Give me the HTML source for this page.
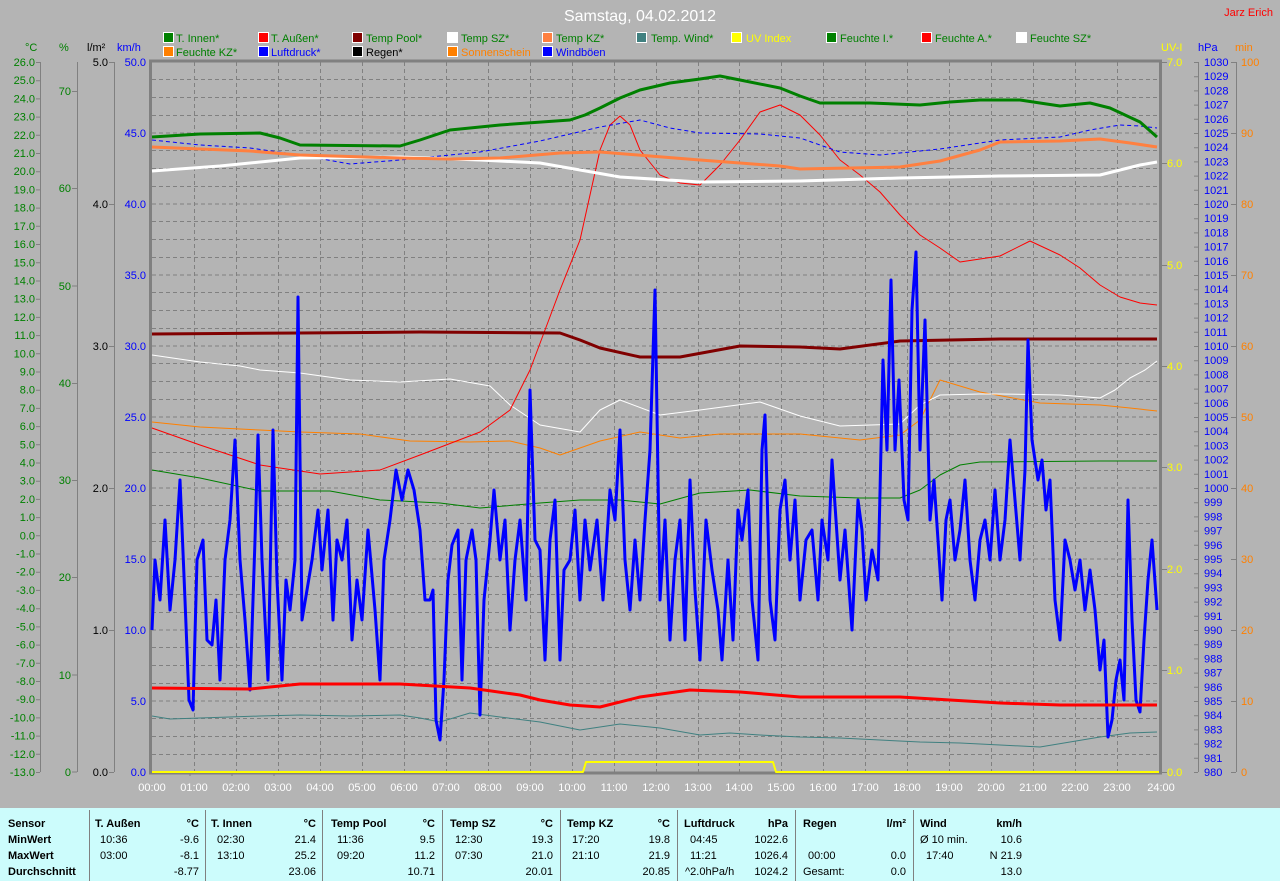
<!DOCTYPE html>
<html><head><meta charset="utf-8"><style>
html,body{margin:0;padding:0;background:#b4b4b4;}
svg{display:block;font-family:"Liberation Sans",sans-serif;}
.g{fill:#008000}.b{fill:#0000ff}.k{fill:#000}.y{fill:#ffff00}.o{fill:#ff8000}.w{fill:#fff}
.t text{font-size:11px}
</style></head><body>
<svg width="1280" height="881" viewBox="0 0 1280 881" xmlns="http://www.w3.org/2000/svg">
<rect width="1280" height="881" fill="#b4b4b4"/>
<text x="640" y="21" text-anchor="middle" fill="#fff" font-size="16">Samstag, 04.02.2012</text>
<text x="1273" y="16" text-anchor="end" fill="#ff0000" font-size="11">Jarz Erich</text>
<!-- legend -->
<g font-size="11">
<g stroke="#fff" stroke-width="1">
<rect x="163.5" y="32.5" width="10" height="10" fill="#008000"/>
<rect x="258.5" y="32.5" width="10" height="10" fill="#ff0000"/>
<rect x="352.5" y="32.5" width="10" height="10" fill="#800000"/>
<rect x="447.5" y="32.5" width="10" height="10" fill="#fff"/>
<rect x="542.5" y="32.5" width="10" height="10" fill="#ff8040"/>
<rect x="636.5" y="32.5" width="10" height="10" fill="#408080"/>
<rect x="731.5" y="32.5" width="10" height="10" fill="#ffff00"/>
<rect x="826.5" y="32.5" width="10" height="10" fill="#008000"/>
<rect x="921.5" y="32.5" width="10" height="10" fill="#ff0000"/>
<rect x="1016.5" y="32.5" width="10" height="10" fill="#fff"/>
<rect x="163.5" y="46.5" width="10" height="10" fill="#ff8000"/>
<rect x="258.5" y="46.5" width="10" height="10" fill="#0000ff"/>
<rect x="352.5" y="46.5" width="10" height="10" fill="#000"/>
<rect x="447.5" y="46.5" width="10" height="10" fill="#ff8000"/>
<rect x="542.5" y="46.5" width="10" height="10" fill="#0000ff"/>
</g>
<text x="176" y="42" class="g">T. Innen*</text>
<text x="271" y="42" class="g">T. Außen*</text>
<text x="366" y="42" class="g">Temp Pool*</text>
<text x="461" y="42" class="g">Temp SZ*</text>
<text x="556" y="42" class="g">Temp KZ*</text>
<text x="651" y="42" class="g">Temp. Wind*</text>
<text x="746" y="42" class="y">UV Index</text>
<text x="840" y="42" class="g">Feuchte I.*</text>
<text x="935" y="42" class="g">Feuchte A.*</text>
<text x="1030" y="42" class="g">Feuchte SZ*</text>
<text x="176" y="56" class="g">Feuchte KZ*</text>
<text x="271" y="56" class="b">Luftdruck*</text>
<text x="366" y="56" class="k">Regen*</text>
<text x="461" y="56" class="o">Sonnenschein</text>
<text x="556" y="56" class="b">Windböen</text>
</g>
<!-- axis headers -->
<g font-size="11">
<text x="25" y="51" class="g">°C</text>
<text x="59" y="51" class="g">%</text>
<text x="87" y="51" class="k">l/m²</text>
<text x="117" y="51" class="b">km/h</text>
<text x="1161" y="51" class="y">UV-I</text>
<text x="1198" y="51" class="b">hPa</text>
<text x="1235" y="51" class="o">min</text>
</g>
<!-- axis lines -->
<g stroke="#808080" stroke-width="1" fill="none">
<path d="M40.5 62V772M77.5 62V772M114.5 62V772M1198.5 62V772M1236.5 62V772"/>
<path d="M36 62.5h4M36 80.7h4M36 98.9h4M36 117.1h4M36 135.3h4M36 153.5h4M36 171.7h4M36 189.9h4M36 208.1h4M36 226.3h4M36 244.5h4M36 262.8h4M36 281h4M36 299.2h4M36 317.4h4M36 335.6h4M36 353.8h4M36 372h4M36 390.2h4M36 408.4h4M36 426.6h4M36 444.8h4M36 463h4M36 481.2h4M36 499.4h4M36 517.6h4M36 535.8h4M36 554h4M36 572.2h4M36 590.4h4M36 608.7h4M36 626.9h4M36 645.1h4M36 663.3h4M36 681.5h4M36 699.7h4M36 717.9h4M36 736.1h4M36 754.3h4M36 772.5h4"/>
<path d="M72 91.5h5M72 188.5h5M72 286h5M72 383.5h5M72 480.5h5M72 577.5h5M72 675h5M72 772h5"/>
<path d="M109 62.5h5M109 204.5h5M109 346.5h5M109 488.5h5M109 630.5h5M109 772.5h5"/>
<path d="M1162 62.5h5M1162 163.5h5M1162 265.5h5M1162 366.5h5M1162 467.5h5M1162 569.5h5M1162 670.5h5M1162 772.5h5"/>
<path d="M1231 62.5h5M1231 133.5h5M1231 204.5h5M1231 275.5h5M1231 346.5h5M1231 417.5h5M1231 488.5h5M1231 559.5h5M1231 630.5h5M1231 701.5h5M1231 772.5h5"/>
</g>
<g stroke="#808080" stroke-width="1" id="hpt"><path d="M1194 62.5h4M1194 76.7h4M1194 90.9h4M1194 105.1h4M1194 119.3h4M1194 133.5h4M1194 147.7h4M1194 161.9h4M1194 176.1h4M1194 190.3h4M1194 204.5h4M1194 218.7h4M1194 232.9h4M1194 247.1h4M1194 261.3h4M1194 275.5h4M1194 289.7h4M1194 303.9h4M1194 318.1h4M1194 332.3h4M1194 346.5h4M1194 360.7h4M1194 374.9h4M1194 389.1h4M1194 403.3h4M1194 417.5h4M1194 431.7h4M1194 445.9h4M1194 460.1h4M1194 474.3h4M1194 488.5h4M1194 502.7h4M1194 516.9h4M1194 531.1h4M1194 545.3h4M1194 559.5h4M1194 573.7h4M1194 587.9h4M1194 602.1h4M1194 616.3h4M1194 630.5h4M1194 644.7h4M1194 658.9h4M1194 673.1h4M1194 687.3h4M1194 701.5h4M1194 715.7h4M1194 729.9h4M1194 744.1h4M1194 758.3h4M1194 772.5h4"/></g>
<!-- °C labels -->
<g font-size="11" class="g" text-anchor="end">
<text x="35" y="66">26.0</text><text x="35" y="84.2">25.0</text><text x="35" y="102.4">24.0</text><text x="35" y="120.6">23.0</text><text x="35" y="138.8">22.0</text><text x="35" y="157">21.0</text><text x="35" y="175.2">20.0</text><text x="35" y="193.4">19.0</text><text x="35" y="211.6">18.0</text><text x="35" y="229.8">17.0</text><text x="35" y="248">16.0</text><text x="35" y="266.3">15.0</text><text x="35" y="284.5">14.0</text><text x="35" y="302.7">13.0</text><text x="35" y="320.9">12.0</text><text x="35" y="339.1">11.0</text><text x="35" y="357.3">10.0</text><text x="35" y="375.5">9.0</text><text x="35" y="393.7">8.0</text><text x="35" y="411.9">7.0</text><text x="35" y="430.1">6.0</text><text x="35" y="448.3">5.0</text><text x="35" y="466.5">4.0</text><text x="35" y="484.7">3.0</text><text x="35" y="502.9">2.0</text><text x="35" y="521.1">1.0</text><text x="35" y="539.3">0.0</text><text x="35" y="557.5">-1.0</text><text x="35" y="575.7">-2.0</text><text x="35" y="593.9">-3.0</text><text x="35" y="612.2">-4.0</text><text x="35" y="630.4">-5.0</text><text x="35" y="648.6">-6.0</text><text x="35" y="666.8">-7.0</text><text x="35" y="685">-8.0</text><text x="35" y="703.2">-9.0</text><text x="35" y="721.4">-10.0</text><text x="35" y="739.6">-11.0</text><text x="35" y="757.8">-12.0</text><text x="35" y="776">-13.0</text>
</g>
<g font-size="11" class="g" text-anchor="end">
<text x="71" y="95">70</text><text x="71" y="192">60</text><text x="71" y="290">50</text><text x="71" y="387">40</text><text x="71" y="484">30</text><text x="71" y="581">20</text><text x="71" y="679">10</text><text x="71" y="776">0</text>
</g>
<g font-size="11" class="k" text-anchor="end">
<text x="108" y="66">5.0</text><text x="108" y="208">4.0</text><text x="108" y="350">3.0</text><text x="108" y="492">2.0</text><text x="108" y="634">1.0</text><text x="108" y="776">0.0</text>
</g>
<g font-size="11" class="b" text-anchor="end">
<text x="146" y="66">50.0</text><text x="146" y="137">45.0</text><text x="146" y="208">40.0</text><text x="146" y="279">35.0</text><text x="146" y="350">30.0</text><text x="146" y="421">25.0</text><text x="146" y="492">20.0</text><text x="146" y="563">15.0</text><text x="146" y="634">10.0</text><text x="146" y="705">5.0</text><text x="146" y="776">0.0</text>
</g>
<g font-size="11" class="y">
<text x="1167" y="66">7.0</text><text x="1167" y="167">6.0</text><text x="1167" y="269">5.0</text><text x="1167" y="370">4.0</text><text x="1167" y="471">3.0</text><text x="1167" y="573">2.0</text><text x="1167" y="674">1.0</text><text x="1167" y="776">0.0</text>
</g>
<g font-size="11" class="b">
<text x="1204" y="66">1030</text><text x="1204" y="80.2">1029</text><text x="1204" y="94.4">1028</text><text x="1204" y="108.6">1027</text><text x="1204" y="122.8">1026</text><text x="1204" y="137">1025</text><text x="1204" y="151.2">1024</text><text x="1204" y="165.4">1023</text><text x="1204" y="179.6">1022</text><text x="1204" y="193.8">1021</text><text x="1204" y="208">1020</text><text x="1204" y="222.2">1019</text><text x="1204" y="236.4">1018</text><text x="1204" y="250.6">1017</text><text x="1204" y="264.8">1016</text><text x="1204" y="279">1015</text><text x="1204" y="293.2">1014</text><text x="1204" y="307.4">1013</text><text x="1204" y="321.6">1012</text><text x="1204" y="335.8">1011</text><text x="1204" y="350">1010</text><text x="1204" y="364.2">1009</text><text x="1204" y="378.4">1008</text><text x="1204" y="392.6">1007</text><text x="1204" y="406.8">1006</text><text x="1204" y="421">1005</text><text x="1204" y="435.2">1004</text><text x="1204" y="449.4">1003</text><text x="1204" y="463.6">1002</text><text x="1204" y="477.8">1001</text><text x="1204" y="492">1000</text><text x="1204" y="506.2">999</text><text x="1204" y="520.4">998</text><text x="1204" y="534.6">997</text><text x="1204" y="548.8">996</text><text x="1204" y="563">995</text><text x="1204" y="577.2">994</text><text x="1204" y="591.4">993</text><text x="1204" y="605.6">992</text><text x="1204" y="619.8">991</text><text x="1204" y="634">990</text><text x="1204" y="648.2">989</text><text x="1204" y="662.4">988</text><text x="1204" y="676.6">987</text><text x="1204" y="690.8">986</text><text x="1204" y="705">985</text><text x="1204" y="719.2">984</text><text x="1204" y="733.4">983</text><text x="1204" y="747.6">982</text><text x="1204" y="761.8">981</text><text x="1204" y="776">980</text>
</g>
<g font-size="11" class="o">
<text x="1241" y="66">100</text><text x="1241" y="137">90</text><text x="1241" y="208">80</text><text x="1241" y="279">70</text><text x="1241" y="350">60</text><text x="1241" y="421">50</text><text x="1241" y="492">40</text><text x="1241" y="563">30</text><text x="1241" y="634">20</text><text x="1241" y="705">10</text><text x="1241" y="776">0</text>
</g>
<!-- grid -->
<g stroke="#808080" stroke-width="1" stroke-dasharray="4,3" fill="none">
<path d="M194.5 62V772M236.5 62V772M278.5 62V772M320.5 62V772M362.5 62V772M404.5 62V772M446.5 62V772M488.5 62V772M530.5 62V772M572.5 62V772M614.5 62V772M656.5 62V772M698.5 62V772M739.5 62V772M781.5 62V772M823.5 62V772M865.5 62V772M907.5 62V772M949.5 62V772M991.5 62V772M1033.5 62V772M1075.5 62V772M1117.5 62V772"/>
<path d="M152 79.5H1159M152 97.5H1159M152 115.5H1159M152 133H1159M152 150.5H1159M152 168.5H1159M152 186.5H1159M152 204H1159M152 221.5H1159M152 239.5H1159M152 257.5H1159M152 275H1159M152 292.5H1159M152 310.5H1159M152 328.5H1159M152 346H1159M152 363.5H1159M152 381.5H1159M152 399.5H1159M152 417H1159M152 434.5H1159M152 452.5H1159M152 470.5H1159M152 488H1159M152 505.5H1159M152 523.5H1159M152 541.5H1159M152 559H1159M152 576.5H1159M152 594.5H1159M152 612.5H1159M152 630H1159M152 647.5H1159M152 665.5H1159M152 683.5H1159M152 701H1159M152 718.5H1159M152 736.5H1159M152 754.5H1159"/>
</g>
<g stroke="#808080" stroke-width="1"><path d="M190 772v4M232 772v4M274 772v4"/></g>
<!-- frame -->
<rect x="150.5" y="61" width="1010" height="712" fill="none" stroke="#808080" stroke-width="3"/>
<!-- series -->
<g fill="none" stroke-linejoin="round">
<polyline stroke="#408080" stroke-width="1" points="152,716 170,719 200,718 260,716 300,715 350,716 400,715 420,718 440,722 470,713 500,717 540,722 580,730 600,727 620,724 660,728 700,735 730,733 760,735 800,737 840,738 880,740 920,742 960,743 1000,745 1040,747 1070,742 1100,737 1130,733 1157,732"/>
<polyline stroke="#008000" stroke-width="1" points="152,470 200,478 260,491 330,491 380,500 440,503 480,508 540,503 580,500 620,500 660,504 700,493 750,490 800,496 860,498 900,498 920,490 940,475 960,465 980,462 1100,461 1157,461"/>
<polyline stroke="#ff8000" stroke-width="1" points="152,422 200,427 260,430 300,432 360,434 410,441 470,442 510,441 540,448 560,455 600,441 640,432 680,438 720,434 800,434 860,440 900,435 920,420 940,380 960,386 980,392 1040,403 1100,405 1130,408 1157,411"/>
<polyline stroke="#ffffff" stroke-width="1" points="152,355 200,362 240,366 260,370 300,373 350,380 400,382 450,379 490,386 510,405 540,425 580,432 600,410 620,400 660,415 700,410 760,402 800,416 840,426 900,424 920,405 940,395 980,394 1000,394 1060,395 1100,398 1115,390 1130,378 1145,370 1157,361"/>
<polyline stroke="#ff0000" stroke-width="1" points="152,428 200,445 260,465 320,474 380,470 420,455 480,432 510,410 530,370 545,330 560,290 580,240 600,150 610,125 620,116 630,125 640,150 660,175 680,183 700,185 720,165 740,140 760,112 780,105 800,115 820,135 840,160 860,175 880,192 900,215 920,235 940,248 960,262 1000,256 1030,241 1060,255 1080,268 1100,285 1120,297 1140,303 1157,305"/>
<polyline stroke="#0000ff" stroke-width="1" stroke-dasharray="4,3" points="152,140 200,145 250,148 300,155 350,164 400,160 480,152 540,141 600,127 640,120 670,128 700,133 760,134 800,138 840,152 880,155 940,149 1000,140 1060,137 1090,130 1120,125 1140,126 1157,128"/>
<polyline stroke="#800000" stroke-width="3" points="152,334 300,333 420,332 560,333 580,340 600,348 640,357 680,357 740,346 800,347 840,349 900,341 1000,339 1157,339"/>
<polyline stroke="#ffffff" stroke-width="3" points="152,171 220,166 300,158 400,157 480,160 540,163 620,177 700,182 800,181 900,178 1000,176 1100,175 1120,170 1140,165 1157,162"/>
<polyline stroke="#ff8040" stroke-width="3" points="152,147 250,151 300,155 400,158 450,159 500,158 560,153 600,152 650,156 700,160 780,166 800,169 850,168 900,167 940,161 980,150 1000,142 1060,141 1100,139 1130,143 1157,147"/>
<polyline stroke="#0000ff" stroke-width="3" points="152,630 155,560 160,600 165,520 170,610 175,560 180,480 185,600 189,700 193,710 197,560 203,540 207,640 212,645 216,600 220,680 225,560 230,520 235,440 240,560 245,620 250,690 255,540 258,435 262,560 268,680 273,430 277,580 282,680 286,580 290,610 295,560 298,297 302,620 307,590 312,560 318,510 322,570 328,510 333,620 337,540 342,560 347,520 352,640 357,580 362,620 368,530 375,610 380,680 384,560 390,520 396,470 402,500 408,470 414,490 420,530 425,600 430,600 433,590 436,720 440,740 444,680 448,580 452,545 458,530 462,680 466,560 472,530 476,560 480,715 484,600 490,540 494,490 500,560 505,520 510,630 515,560 520,520 526,600 530,390 535,540 540,550 545,660 550,540 555,500 560,660 564,570 570,560 575,510 580,600 585,520 590,570 597,520 603,600 610,490 615,520 620,430 625,560 630,610 635,540 640,600 645,520 650,450 655,290 660,600 665,520 670,640 675,560 680,520 685,640 690,480 695,590 700,660 706,520 712,570 718,610 722,660 728,560 733,640 738,510 742,540 748,490 752,600 758,660 762,450 765,415 770,600 775,640 780,510 785,480 790,560 795,500 800,600 806,540 812,530 818,600 822,520 828,560 832,460 836,520 840,580 845,530 852,630 858,500 862,530 866,600 872,550 878,580 883,360 887,450 891,280 895,450 899,380 904,500 908,520 912,310 916,252 920,450 925,320 930,520 934,480 938,540 942,600 946,520 950,500 955,560 960,530 965,480 970,560 975,600 980,540 985,520 990,560 995,490 1000,560 1005,520 1010,440 1015,500 1020,560 1025,470 1028,340 1032,440 1038,480 1042,460 1046,510 1050,480 1055,600 1060,640 1065,540 1070,560 1075,590 1080,560 1085,610 1090,570 1095,610 1100,670 1104,640 1108,737 1112,720 1116,680 1120,660 1124,700 1128,500 1132,620 1136,700 1140,712 1144,640 1148,580 1152,540 1157,610"/>
<polyline stroke="#008000" stroke-width="3" points="152,137 200,134 260,133 280,138 300,145 400,146 420,140 450,130 500,125 570,120 585,115 600,108 620,98 640,90 670,83 700,79 720,76 740,80 780,88 800,96 820,103 870,103 920,105 950,102 980,100 1020,100 1060,106 1090,103 1110,108 1125,115 1140,122 1157,137"/>
<polyline stroke="#ff0000" stroke-width="3" points="152,688 250,689 300,684 400,684 470,688 520,695 540,700 570,705 600,707 640,697 690,690 740,692 800,697 900,697 950,700 1000,703 1060,705 1157,705"/>
<polyline stroke="#ffff00" stroke-width="2" points="152,772 583,772 586,762 773,762 776,772 1159,772"/>
</g>
<!-- time labels -->
<g font-size="11" fill="#fff" text-anchor="middle">
<text x="152" y="791">00:00</text><text x="194" y="791">01:00</text><text x="236" y="791">02:00</text><text x="278" y="791">03:00</text><text x="320" y="791">04:00</text><text x="362" y="791">05:00</text><text x="404" y="791">06:00</text><text x="446" y="791">07:00</text><text x="488" y="791">08:00</text><text x="530" y="791">09:00</text><text x="572" y="791">10:00</text><text x="614" y="791">11:00</text><text x="656" y="791">12:00</text><text x="698" y="791">13:00</text><text x="739" y="791">14:00</text><text x="781" y="791">15:00</text><text x="823" y="791">16:00</text><text x="865" y="791">17:00</text><text x="907" y="791">18:00</text><text x="949" y="791">19:00</text><text x="991" y="791">20:00</text><text x="1033" y="791">21:00</text><text x="1075" y="791">22:00</text><text x="1117" y="791">23:00</text><text x="1161" y="791">24:00</text>
</g>
<!-- table -->
<rect x="0" y="808" width="1280" height="73" fill="#ccfcfc"/>
<g stroke="#808080" stroke-width="1"><path d="M89.5 810V881M205.5 810V881M322.5 810V881M442.5 810V881M560.5 810V881M677.5 810V881M795.5 810V881M913.5 810V881"/></g>
<g font-size="11" fill="#000" class="t">
<g font-weight="bold">
<text x="8" y="827">Sensor</text><text x="8" y="843">MinWert</text><text x="8" y="859">MaxWert</text><text x="8" y="875">Durchschnitt</text>
<text x="95" y="827">T. Außen</text><text x="199" y="827" text-anchor="end">°C</text>
<text x="211" y="827">T. Innen</text><text x="316" y="827" text-anchor="end">°C</text>
<text x="331" y="827">Temp Pool</text><text x="435" y="827" text-anchor="end">°C</text>
<text x="450" y="827">Temp SZ</text><text x="553" y="827" text-anchor="end">°C</text>
<text x="567" y="827">Temp KZ</text><text x="670" y="827" text-anchor="end">°C</text>
<text x="684" y="827">Luftdruck</text><text x="788" y="827" text-anchor="end">hPa</text>
<text x="803" y="827">Regen</text><text x="906" y="827" text-anchor="end">l/m²</text>
<text x="920" y="827">Wind</text><text x="1022" y="827" text-anchor="end">km/h</text>
</g>
<text x="100" y="843">10:36</text><text x="199" y="843" text-anchor="end">-9.6</text>
<text x="100" y="859">03:00</text><text x="199" y="859" text-anchor="end">-8.1</text>
<text x="199" y="875" text-anchor="end">-8.77</text>
<text x="217" y="843">02:30</text><text x="316" y="843" text-anchor="end">21.4</text>
<text x="217" y="859">13:10</text><text x="316" y="859" text-anchor="end">25.2</text>
<text x="316" y="875" text-anchor="end">23.06</text>
<text x="337" y="843">11:36</text><text x="435" y="843" text-anchor="end">9.5</text>
<text x="337" y="859">09:20</text><text x="435" y="859" text-anchor="end">11.2</text>
<text x="435" y="875" text-anchor="end">10.71</text>
<text x="455" y="843">12:30</text><text x="553" y="843" text-anchor="end">19.3</text>
<text x="455" y="859">07:30</text><text x="553" y="859" text-anchor="end">21.0</text>
<text x="553" y="875" text-anchor="end">20.01</text>
<text x="572" y="843">17:20</text><text x="670" y="843" text-anchor="end">19.8</text>
<text x="572" y="859">21:10</text><text x="670" y="859" text-anchor="end">21.9</text>
<text x="670" y="875" text-anchor="end">20.85</text>
<text x="690" y="843">04:45</text><text x="788" y="843" text-anchor="end">1022.6</text>
<text x="690" y="859">11:21</text><text x="788" y="859" text-anchor="end">1026.4</text>
<text x="685" y="875">^2.0hPa/h</text><text x="788" y="875" text-anchor="end">1024.2</text>
<text x="808" y="859">00:00</text><text x="906" y="859" text-anchor="end">0.0</text>
<text x="803" y="875">Gesamt:</text><text x="906" y="875" text-anchor="end">0.0</text>
<text x="920" y="843">Ø 10 min.</text><text x="1022" y="843" text-anchor="end">10.6</text>
<text x="926" y="859">17:40</text><text x="1022" y="859" text-anchor="end">N 21.9</text>
<text x="1022" y="875" text-anchor="end">13.0</text>
</g>
</svg>
</body></html>
